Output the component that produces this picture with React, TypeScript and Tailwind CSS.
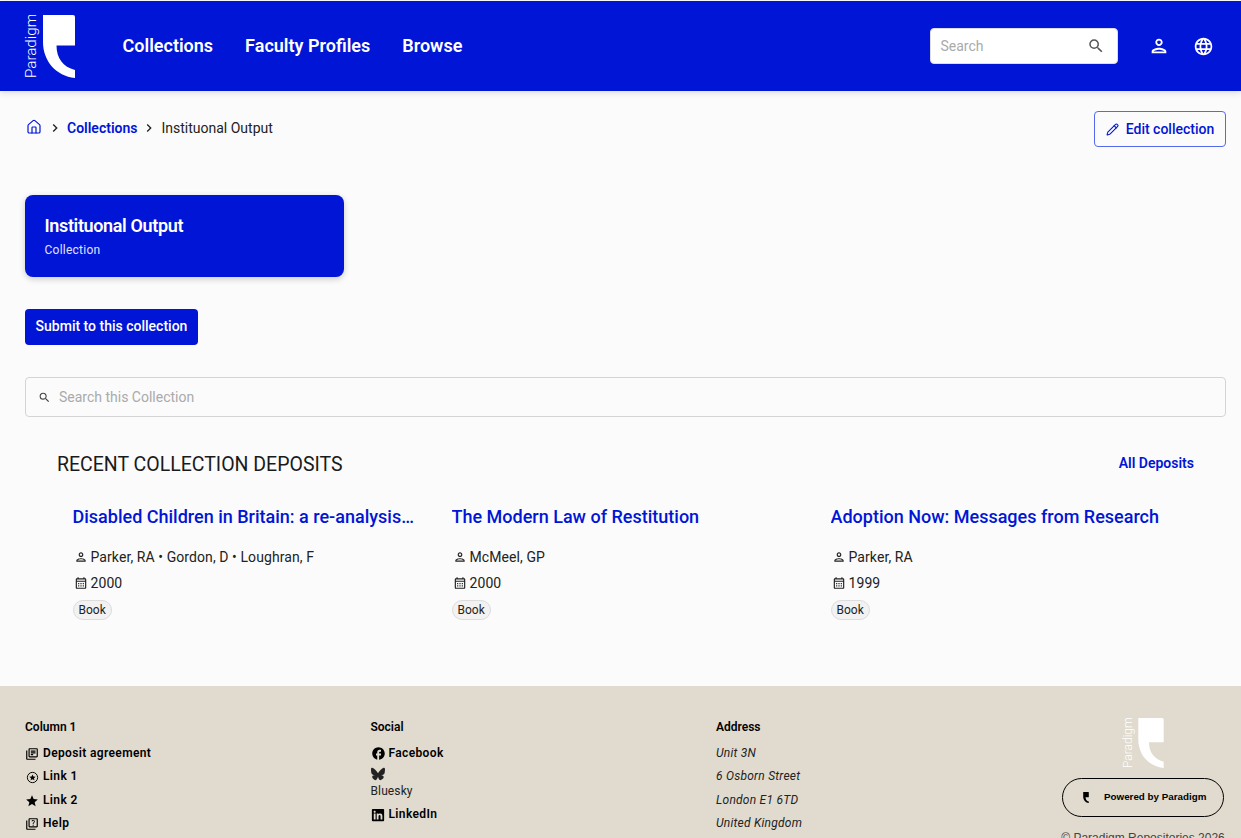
import React from "react";
import {
  MdSearch, MdOutlinePerson, MdLanguage, MdOutlineCalendarMonth, MdOutlineLibraryBooks,
  MdStar, MdOutlineQuiz, MdFacebook, MdChevronRight,
} from "react-icons/md";
import { FaBluesky, FaLinkedin } from "react-icons/fa6";
import { Home, Pencil } from "lucide-react";

const Mark = ({ className }: { className?: string }) => (
  <svg viewBox="0 0 32 63" className={className} fill="currentColor">
    <path d="M0 0H30Q32 0 32 2V30.5H13.5C13.5 43 20 52 32 55V63C13 61 0 46 0 27Z" />
  </svg>
);

const StarCircle = ({ className }: { className?: string }) => (
  <svg viewBox="0 0 24 24" className={className}>
    <circle cx="12" cy="12" r="9.5" fill="none" stroke="currentColor" strokeWidth="1.8" />
    <path fill="currentColor" d="M12 6.5l1.7 3.7 4 .4-3 2.7.9 4-3.6-2.1-3.6 2.1.9-4-3-2.7 4-.4z" />
  </svg>
);

const Logo = ({ small }: { small?: boolean }) => (
  <div className={small ? "flex items-stretch gap-[3px] text-white h-[50px]" : "flex items-stretch gap-[5px] text-white h-[63px]"}>
    <span
      className={small ? "rotate-180 text-[12px] leading-[13px] font-light [writing-mode:vertical-rl] text-center" : "rotate-180 text-[15.2px] leading-[13px] font-light [writing-mode:vertical-rl] text-center"}
    >
      Paradigm
    </span>
    <Mark className={small ? "w-[26px] h-[50px]" : "w-[32px] h-[63px]"} />
  </div>
);

const Deposit = ({ title, authors, year }: { title: string; authors: string[]; year: string }) => (
  <div className="w-[379px] pl-[15.5px] pr-[16px]">
    <a className="block truncate w-[344px] text-[18px] leading-[26px] font-medium text-[#0015d6]">{title}</a>
    <div className="mt-[17px] flex items-center gap-[2px] text-[14px] leading-[20px] text-[#222] tracking-[0.006em]">
      <MdOutlinePerson className="w-[14px] h-[14px] ml-[1px] mr-[1px]" />
      <span>{authors.join(" • ")}</span>
    </div>
    <div className="mt-[6px] flex items-center gap-[2px] text-[14px] leading-[20px] text-[#222] tracking-[0.006em]">
      <MdOutlineCalendarMonth className="w-[14px] h-[14px] ml-[1px] mr-[1px]" />
      <span>{year}</span>
    </div>
    <span className="mt-[7px] inline-block h-[20px] rounded-full border border-[#dcdcdc] bg-[#f2f2f2] px-[5px] text-[12px] leading-[18px] text-[#222]">
      Book
    </span>
  </div>
);

const FootLink = ({ icon, label }: { icon: React.ReactNode; label: string }) => (
  <div className="flex items-center h-[23.4px] text-[12px] font-semibold text-black tracking-[0.03em]">
    <span className="w-[18px] flex items-center mt-[2px]">{icon}</span>
    <span>{label}</span>
  </div>
);

export default function App() {
  return (
    <div className="h-[838px] overflow-hidden bg-[#fbfbfb] font-['Roboto',sans-serif] pt-px flex flex-col">
      <header className="h-[90px] shrink-0 bg-[#0015d6] flex items-center pl-[25px] pr-[27px] shadow-[0_2px_6px_rgba(0,0,0,0.12)] relative">
        <Logo />
        <nav className="ml-[47.5px] -mt-[2px] flex gap-[32px] text-[18px] font-semibold text-white">
          <a>Collections</a>
          <a>Faculty Profiles</a>
          <a>Browse</a>
        </nav>
        <div className="ml-auto w-[188px] h-[36px] rounded-[4px] bg-white border border-[#ddd] flex items-center justify-between pl-[9.5px] pr-[12px]">
          <span className="text-[14px] text-[#aaa]">Search</span>
          <MdSearch className="w-[18px] h-[18px] text-[#555]" />
        </div>
        <MdOutlinePerson className="ml-[30px] w-[22px] h-[22px] text-white" />
        <MdLanguage className="ml-[23px] w-[21px] h-[21px] text-white" />
      </header>

      <main className="flex-1 px-[25px] pr-[15px]">
        <div className="flex items-start justify-between pt-[20px]">
          <div className="flex items-center h-[34px] text-[14px]">
            <Home className="w-[16px] h-[16px] text-[#0015d6] ml-[1px] mr-[5px] -mt-[3px]" strokeWidth={1.8} />
            <MdChevronRight className="w-[16px] h-[16px] text-[#222] mr-[4px]" />
            <a className="font-semibold text-[#0015d6]">Collections</a>
            <MdChevronRight className="w-[16px] h-[16px] text-[#222] ml-[4px] mr-[4px]" />
            <span className="text-[#222]">Instituonal Output</span>
          </div>
          <button className="w-[132px] h-[36px] rounded-[4px] border border-[#5468f0] flex items-center justify-center gap-[7px] text-[14px] font-medium text-[#0015d6]">
            <Pencil className="w-[13px] h-[13px]" strokeWidth={2} />
            Edit collection
          </button>
        </div>

        <div className="mt-[48px] w-[319px] h-[82px] rounded-[8px] bg-[#0015d6] shadow-[0_2px_6px_rgba(0,0,0,0.2)] pl-[19.5px] pt-[20px] text-white">
          <div className="text-[18px] leading-[22px] font-semibold tracking-[-0.02em]">Instituonal Output</div>
          <div className="mt-[4px] text-[12px] leading-[18px] text-[#e0e3ff] tracking-[0.02em]">Collection</div>
        </div>

        <button className="mt-[32px] block w-[173px] h-[36px] pb-[2px] rounded-[4px] bg-[#0015d6] text-[14px] font-medium text-white">
          Submit to this collection
        </button>

        <div className="mt-[32px] h-[40px] rounded-[4px] border border-[#d4d4d4] flex items-center pl-[12px] gap-[8px]">
          <MdSearch className="w-[13px] h-[13px] text-[#444]" />
          <span className="text-[14px] text-[#aaa]">Search this Collection</span>
        </div>

        <div className="mt-[34px] pl-[32px] pr-[32px] flex items-center justify-between h-[26px]">
          <h2 className="text-[19.5px] font-normal text-[#1a1a1a] mt-[1px]">RECENT COLLECTION DEPOSITS</h2>
          <a className="text-[14px] font-semibold text-[#0015d6] -mt-[1px]">All Deposits</a>
        </div>

        <div className="mt-[27px] ml-[32px] flex">
          <Deposit title="Disabled Children in Britain: a re-analysis of the OPCS Disability Surveys" authors={["Parker, RA", "Gordon, D", "Loughran, F"]} year="2000" />
          <Deposit title="The Modern Law of Restitution" authors={["McMeel, GP"]} year="2000" />
          <Deposit title="Adoption Now: Messages from Research" authors={["Parker, RA"]} year="1999" />
        </div>
      </main>

      <footer className="h-[152px] shrink-0 bg-[#e0dbce] pl-[25px] pr-[17px] pt-[33px] flex items-start">
        <div className="w-[345.5px]">
          <div className="text-[12px] font-semibold text-black h-[22.3px] leading-[16px]">Column 1</div>
          <FootLink icon={<MdOutlineLibraryBooks className="w-[14px] h-[14px]" />} label="Deposit agreement" />
          <FootLink icon={<StarCircle className="w-[13px] h-[13px] ml-px" />} label="Link 1" />
          <FootLink icon={<MdStar className="w-[14px] h-[14px]" />} label="Link 2" />
          <FootLink icon={<MdOutlineQuiz className="w-[14px] h-[14px]" />} label="Help" />
        </div>
        <div className="w-[345.5px]">
          <div className="text-[12px] font-semibold text-black h-[22.3px] leading-[16px]">Social</div>
          <FootLink icon={<MdFacebook className="w-[15px] h-[15px]" />} label="Facebook" />
          <div className="text-[12px] leading-[16px] text-[#222] tracking-[0.01em] mt-[2px]">
            <FaBluesky className="w-[14px] h-[14px]" />
            <div className="mt-[2px]">Bluesky</div>
          </div>
          <div className="mt-[4px]">
            <FootLink icon={<FaLinkedin className="w-[14px] h-[14px]" />} label="LinkedIn" />
          </div>
        </div>
        <div className="flex-1">
          <div className="text-[12px] font-semibold text-black h-[22.3px] leading-[16px]">Address</div>
          {["Unit 3N", "6 Osborn Street", "London E1 6TD", "United Kingdom"].map((l) => (
            <div key={l} className="h-[23.4px] flex items-center text-[12px] italic text-[#222] tracking-[0.02em]">{l}</div>
          ))}
        </div>
        <div className="w-[162px] flex flex-col items-center -mt-[1px]">
          <Logo small />
          <div className="mt-[10px] w-[162px] h-[39px] rounded-full border border-black flex items-center pl-[20px] gap-[15px] font-['Liberation_Sans',sans-serif] text-[9.8px] font-bold text-black">
            <Mark className="w-[6px] h-[11px]" />
            <span>Powered by Paradigm</span>
          </div>
          <div className="mt-[12px] whitespace-nowrap font-['Liberation_Sans',sans-serif] text-[12px] text-[#444]">© Paradigm Repositories 2026</div>
        </div>
      </footer>
    </div>
  );
}
